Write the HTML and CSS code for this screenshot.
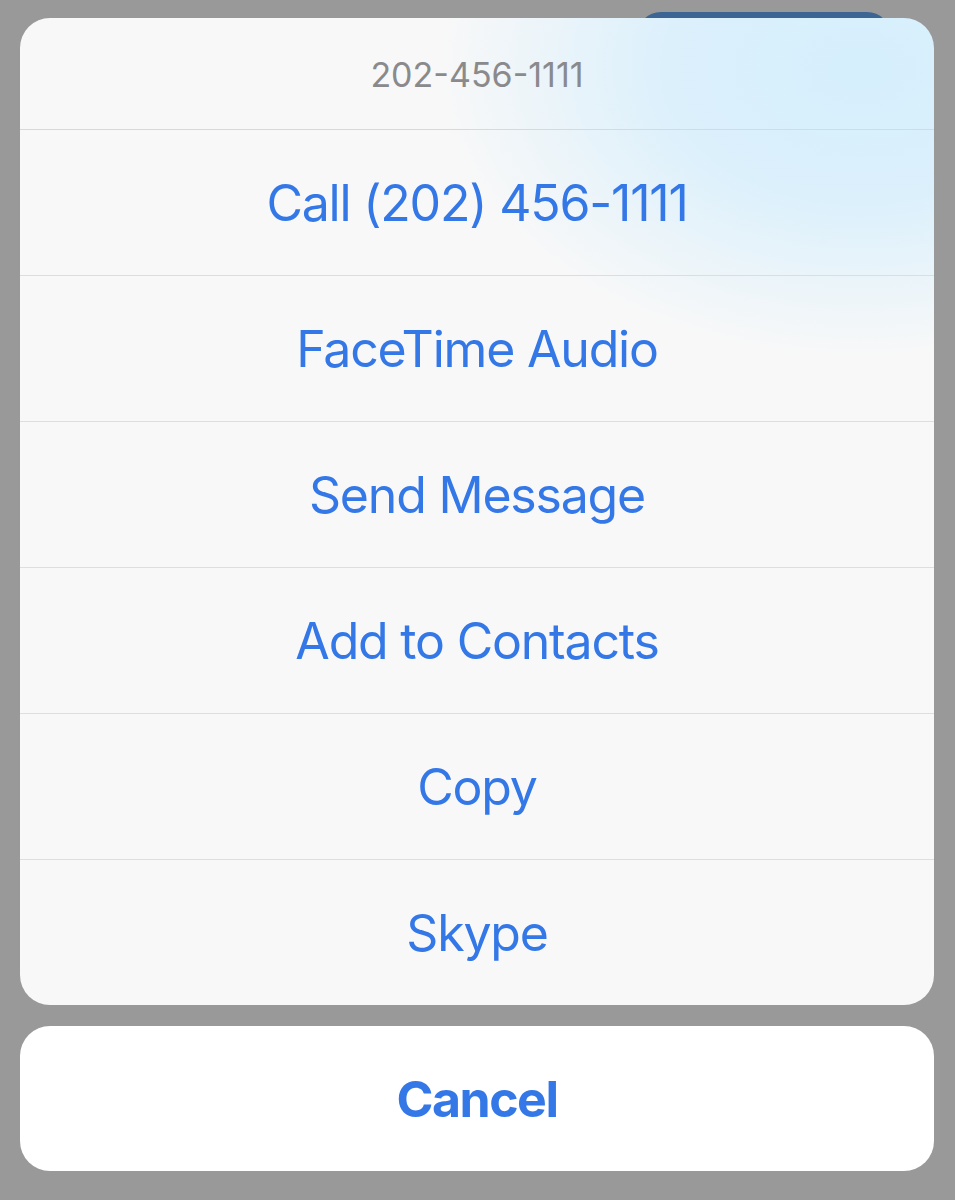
FILE: index.html
```html
<!DOCTYPE html>
<html lang="en">
<head>
  <meta charset="UTF-8">
  <title>Action Sheet</title>
  <meta name="viewport" content="width=device-width, initial-scale=1">
  <link rel="stylesheet" href="styles.css">
</head>
<body>

<div class="screen">
  <div class="behind-button"></div>

  <div class="sheet">
    <div class="sheet-title">202-456-1111</div>
    <div class="sheet-item">Call (202) 456-1111</div>
    <div class="sheet-item">FaceTime Audio</div>
    <div class="sheet-item">Send Message</div>
    <div class="sheet-item">Add to Contacts</div>
    <div class="sheet-item">Copy</div>
    <div class="sheet-item">Skype</div>
  </div>

  <div class="cancel">Cancel</div>
</div>

</body>
</html>
```

FILE: styles.css
```css
body {
  margin: 0;
  background: #999999;
  font-family: Inter, "Noto Sans", sans-serif;
}

.screen {
  position: relative;
  width: 955px;
  height: 1200px;
  padding: 18px 21px 0 20px;
  box-sizing: border-box;
}

/* button of the page underneath, peeking out at the top */
.behind-button {
  position: absolute;
  left: 637px;
  top: 12px;
  width: 254px;
  height: 40px;
  background: #3d6594;
  border-radius: 24px 24px 0 0;
}

.sheet {
  position: relative;
  border-radius: 30px;
  overflow: hidden;
  background:
    radial-gradient(ellipse 420px 290px at 840px 50px, rgba(214, 239, 253, 1) 0%, rgba(216, 239, 252, 0.9) 45%, rgba(248, 248, 248, 0) 100%),
    #f8f8f8;
}

.sheet-title {
  height: 112px;
  display: flex;
  align-items: center;
  justify-content: center;
  font-size: 34px;
  color: #8a8a8d;
  border-bottom: 1px solid #c4e0ef;
  box-sizing: border-box;
  padding-top: 1px;
}

.sheet-item {
  height: 146px;
  display: flex;
  align-items: center;
  justify-content: center;
  font-size: 50px;
  letter-spacing: -1.2px;
  color: #3478e8;
  border-bottom: 1px solid #dedee1;
  box-sizing: border-box;
}

.sheet-item:nth-child(2) {
  border-bottom-color: #cfe2ec;
}

.sheet-item:last-child {
  border-bottom: none;
  height: 145px;
}

.cancel {
  margin-top: 21px;
  height: 145px;
  background: #ffffff;
  border-radius: 30px;
  display: flex;
  align-items: center;
  justify-content: center;
  font-size: 50px;
  font-weight: 700;
  letter-spacing: -1.5px;
  color: #3478e8;
}
```
